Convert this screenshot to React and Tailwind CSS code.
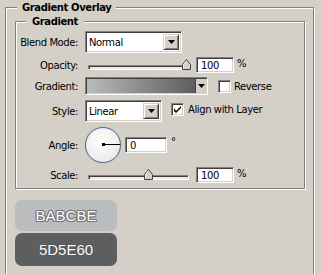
import React from "react";

const sunken =
  "border border-t-[#808080] border-l-[#808080] border-b-white border-r-white shadow-[inset_1px_1px_0_#404040,inset_-1px_-1px_0_#d4d0c8]";
const raised =
  "border border-t-[#d4d0c8] border-l-[#d4d0c8] border-b-[#404040] border-r-[#404040] shadow-[inset_1px_1px_0_#ffffff,inset_-1px_-1px_0_#808080]";

function Arrow() {
  return (
    <svg width="7" height="4" viewBox="0 0 7 4">
      <path d="M0 0H7L3.5 4Z" fill="#000" />
    </svg>
  );
}

function Combo({ w, text }) {
  return (
    <div className={`${sunken} bg-white h-full flex items-stretch ${w}`}>
      <div className="flex-1 flex items-center pl-[3px] pt-[1px] text-black">{text}</div>
      <div className={`${raised} w-[16px] m-[2px] bg-[#d4d0c8] flex items-center justify-center`}>
        <Arrow />
      </div>
    </div>
  );
}

function Input({ w, text }) {
  return (
    <div className={`${sunken} bg-white h-[16px] ${w} flex items-center pl-[4px] text-black`}>{text}</div>
  );
}

function Check({ checked }) {
  return (
    <div className={`${sunken} bg-white w-[13px] h-[13px] flex items-center justify-center`}>
      {checked && (
        <svg width="7" height="7" viewBox="0 0 7 7">
          <path d="M0 2L0 5L2 7L7 2L7 0L2 5Z" fill="#000" />
        </svg>
      )}
    </div>
  );
}

function Slider({ pos }) {
  return (
    <div className="relative w-[107px] h-[16px]">
      <div className="absolute left-[3px] top-[8px] w-[101px] h-[5px] border border-t-[#808080] border-l-[#808080] border-b-white border-r-white shadow-[inset_1px_1px_0_#404040] bg-[#ecebe6]" />
      <svg className="absolute top-[2px]" style={{ left: pos }} width="9" height="11" viewBox="0 0 9 11">
        <path d="M0.5 10.5V5.5L4.5 0.5L8.5 5.5V10.5Z" fill="#d4d0c8" stroke="#404040" />
        <path d="M1.5 9.5V5.8L4.5 2" fill="none" stroke="#fff" />
      </svg>
    </div>
  );
}

function Label({ children }) {
  return <div className="w-[64px] text-right pr-[2px]">{children}</div>;
}

export default function App() {
  return (
    <div
      className="w-[321px] h-[274px] bg-[#d4d0c8] overflow-hidden text-[10px] tracking-[-0.4px] text-black leading-[13px]"
      style={{ fontFamily: "'DejaVu Sans', sans-serif" }}
    >
      <div className="pt-[7px] pl-[5px]">
        <div className="relative w-[309px] h-[300px] border border-[#808080] shadow-[inset_1px_1px_0_#fff,1px_1px_0_#fff] pt-[13px] pl-[9px]">
          <div className="absolute left-[11px] top-[-7px] px-[5px] bg-[#d4d0c8] font-bold">Gradient Overlay</div>

          <div className="relative w-[290px] h-[168px] border border-[#808080] shadow-[inset_1px_1px_0_#fff,1px_1px_0_#fff] pt-[9px]">
            <div className="absolute left-[10px] top-[-7px] px-[6px] bg-[#d4d0c8] font-bold">Gradient</div>

            <div className="flex items-center h-[22px]">
              <Label>Blend Mode:</Label>
              <div className="ml-[5px] h-full">
                <Combo w="w-[97px]" text="Normal" />
              </div>
            </div>

            <div className="flex items-center h-[16px] mt-[4px]">
              <Label>Opacity:</Label>
              <div className="ml-[5px]">
                <Slider pos={97} />
              </div>
              <div className="ml-[4px]">
                <Input w="w-[38px]" text="100" />
              </div>
              <div className="ml-[3px] -mt-[3px]">%</div>
            </div>

            <div className="flex items-center h-[18px] mt-[4px]">
              <Label>Gradient:</Label>
              <div className={`ml-[5px] w-[123px] h-full ${sunken} flex`}>
                <div className="flex-1 bg-gradient-to-r from-[#babcbe] to-[#5d5e60] m-[1px] mr-0" />
                <div className="w-[11px] bg-[#d4d0c8] border-l border-[#404040] my-[1px] mr-[1px] flex items-center justify-center">
                  <Arrow />
                </div>
              </div>
              <div className="ml-[10px]">
                <Check />
              </div>
              <div className="ml-[3px]">Reverse</div>
            </div>

            <div className="flex items-center h-[22px] mt-[5px]">
              <Label>Style:</Label>
              <div className="ml-[5px] h-full">
                <Combo w="w-[77px]" text="Linear" />
              </div>
              <div className="ml-[9px] -mt-[3px]">
                <Check checked />
              </div>
              <div className="ml-[4px] -mt-[3px]">Align with Layer</div>
            </div>

            <div className="flex items-center h-[36px] mt-[5px]">
              <Label>Angle:</Label>
              <div className="ml-[5px] relative w-[36px] h-[36px] rounded-full border-[1.5px] border-[#4f6696] bg-[radial-gradient(circle_at_45%_40%,#ffffff,#ecebe8_70%,#dcdad4)] shadow-[0_0_1px_#8a97b8]">
                <div className="absolute left-[17px] top-[16px] w-[17px] h-[1px] bg-black" />
                <div className="absolute left-[16px] top-[15px] w-[3px] h-[3px] bg-black" />
              </div>
              <div className="ml-[4px]">
                <Input w="w-[42px]" text="0" />
              </div>
              <div className="ml-[4px] -mt-[8px]">°</div>
            </div>

            <div className="flex items-center h-[16px] mt-[4px]">
              <Label>Scale:</Label>
              <div className="ml-[5px]">
                <Slider pos={59} />
              </div>
              <div className="ml-[4px]">
                <Input w="w-[38px]" text="100" />
              </div>
              <div className="ml-[3px] -mt-[3px]">%</div>
            </div>
          </div>

          <div
            className="mt-[11px] flex flex-col gap-[2px] text-[15px] tracking-normal text-white leading-none"
            style={{ fontFamily: "'Liberation Sans', Arial, sans-serif" }}
          >
            <div className="w-[102px] h-[31px] rounded-[7px] bg-[#babcbe] flex items-center justify-center [text-shadow:1px_0_0_#6f7174,-1px_0_0_#6f7174,0_1px_0_#6f7174,0_-1px_0_#6f7174,1px_1px_0_#8a8c8f,-1px_-1px_0_#8a8c8f,1px_-1px_0_#8a8c8f,-1px_1px_0_#8a8c8f]">
              BABCBE
            </div>
            <div className="w-[102px] h-[33px] rounded-[7px] bg-[#5d5e60] flex items-center justify-center [text-shadow:0_0_1px_#3a3b3c]">
              5D5E60
            </div>
          </div>
        </div>
      </div>
    </div>
  );
}
